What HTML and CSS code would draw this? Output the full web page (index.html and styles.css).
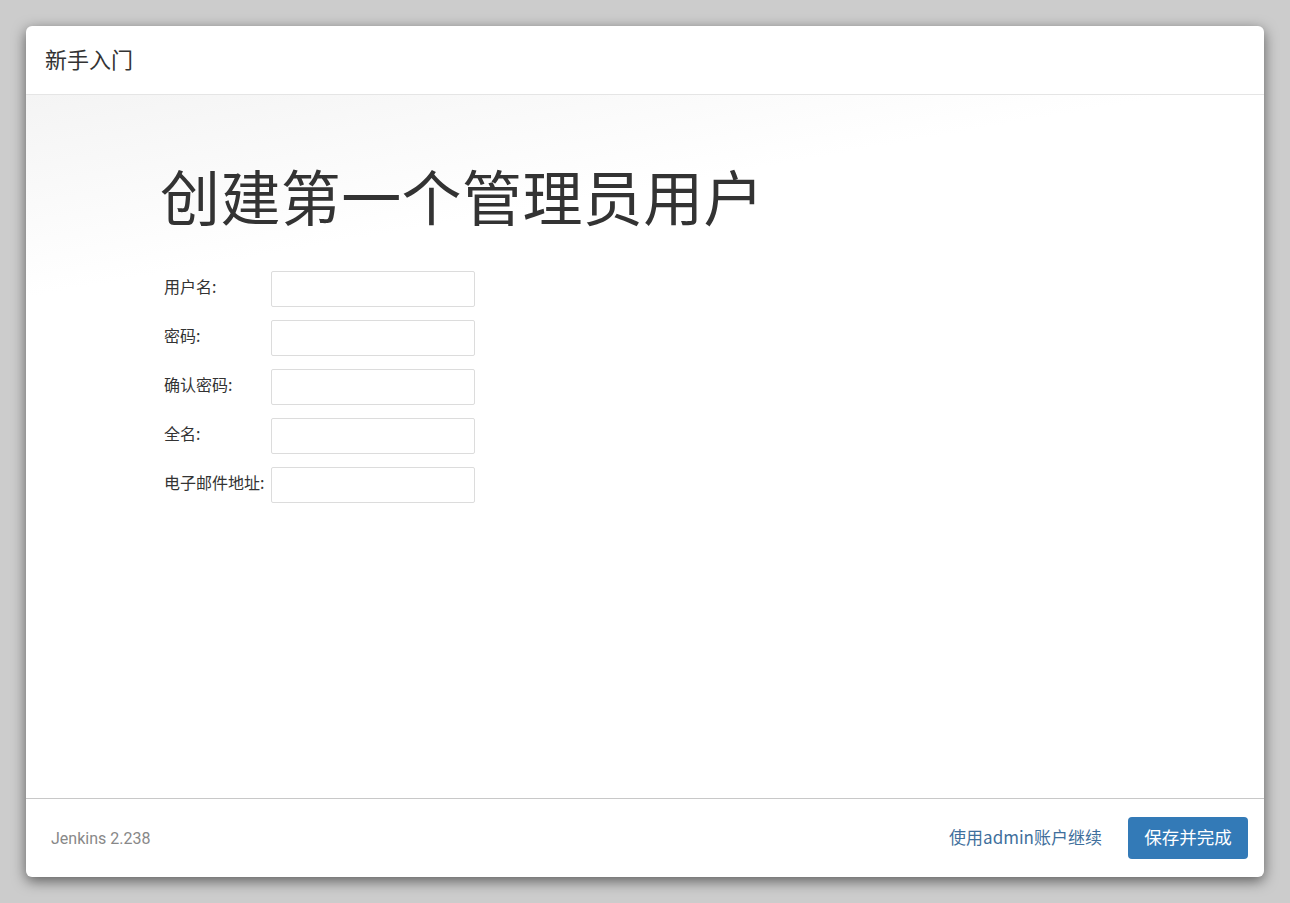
FILE: index.html
```html
<!DOCTYPE html>
<html lang="zh-CN">
<head>
    <meta charset="UTF-8">
    <title>Jenkins 新手入门</title>
    <link rel="stylesheet" href="styles.css">
</head>
<body>
    <div class="modal">
        <!-- 标题栏 -->
        <div class="modal-header">
            <h4 class="modal-title">新手入门</h4>
        </div>

        <!-- 创建管理员 -->
        <div class="modal-body">
            <h1>创建第一个管理员用户</h1>
            <div class="form">
                <div class="form-row">
                    <label>用户名:</label>
                    <input type="text">
                </div>
                <div class="form-row">
                    <label>密码:</label>
                    <input type="password">
                </div>
                <div class="form-row">
                    <label>确认密码:</label>
                    <input type="password">
                </div>
                <div class="form-row">
                    <label>全名:</label>
                    <input type="text">
                </div>
                <div class="form-row">
                    <label>电子邮件地址:</label>
                    <input type="text">
                </div>
            </div>
        </div>

        <div class="modal-footer">
            <div class="version">Jenkins 2.238</div>
            <div class="actions">
                <a class="btn-link" href="#">使用admin账户继续</a>
                <button class="btn-primary">保存并完成</button>
            </div>
        </div>
    </div>
</body>
</html>
```

FILE: styles.css
```css
* {
    box-sizing: border-box;
    margin: 0;
    padding: 0;
}

html, body {
    height: 100%;
}

body {
    font-family: Roboto, 'Noto Sans CJK SC', sans-serif;
    background-color: #cccccc;
    color: #333;
    padding: 26px;
}

.modal {
    background: white;
    width: 1238px;
    height: 851px;
    border-radius: 6px;
    box-shadow: 0 4px 14px rgba(0,0,0,0.55);
    display: flex;
    flex-direction: column;
    overflow: hidden;
}

/* 标题栏 */
.modal-header {
    height: 69px;
    border-bottom: 1px solid #e5e5e5;
    padding: 0 19px;
    display: flex;
    align-items: center;
}

.modal-title {
    font-family: 'Noto Sans CJK SC', sans-serif;
    font-size: 22px;
    font-weight: normal;
    color: #333;
    margin-top: -4px;
}

/* 内容 */
.modal-body {
    flex: 1;
    background: linear-gradient(170deg, #f4f4f4 0%, #ffffff 22%);
    padding: 60px 0 0 134px;
}

.modal-body h1 {
    font-family: 'Noto Sans CJK SC', sans-serif;
    font-size: 60px;
    font-weight: normal;
    line-height: 80px;
    color: #333;
    letter-spacing: 0.4px;
    margin-bottom: 36px;
}

.form {
    padding-left: 4px;
}

.form-row {
    display: flex;
    align-items: flex-start;
    margin-bottom: 13px;
}

.form-row label {
    width: 107px;
    font-family: 'Noto Sans CJK SC', sans-serif;
    font-size: 16px;
    color: #333;
    line-height: 20px;
    padding-top: 5px;
    white-space: nowrap;
}

.form-row input {
    width: 204px;
    height: 36px;
    border: 1px solid #dcdcdc;
    border-radius: 2px;
    background: white;
}

/* 底部 */
.modal-footer {
    height: 79px;
    border-top: 1px solid #c8c8c8;
    display: flex;
    align-items: center;
    justify-content: space-between;
    padding: 0 16px 0 25px;
}

.version {
    font-size: 16px;
    color: #888;
}

.actions {
    display: flex;
    align-items: center;
}

.btn-link {
    font-family: 'Noto Sans CJK SC', sans-serif;
    font-size: 17px;
    color: #3f6f9c;
    text-decoration: none;
    margin-right: 26px;
    margin-top: -3px;
}

.btn-primary {
    font-family: 'Noto Sans CJK SC', sans-serif;
    background: #337ab7;
    color: white;
    border: none;
    border-radius: 4px;
    width: 120px;
    height: 42px;
    font-size: 17.5px;
    padding-bottom: 3px;
    cursor: pointer;
}
```
